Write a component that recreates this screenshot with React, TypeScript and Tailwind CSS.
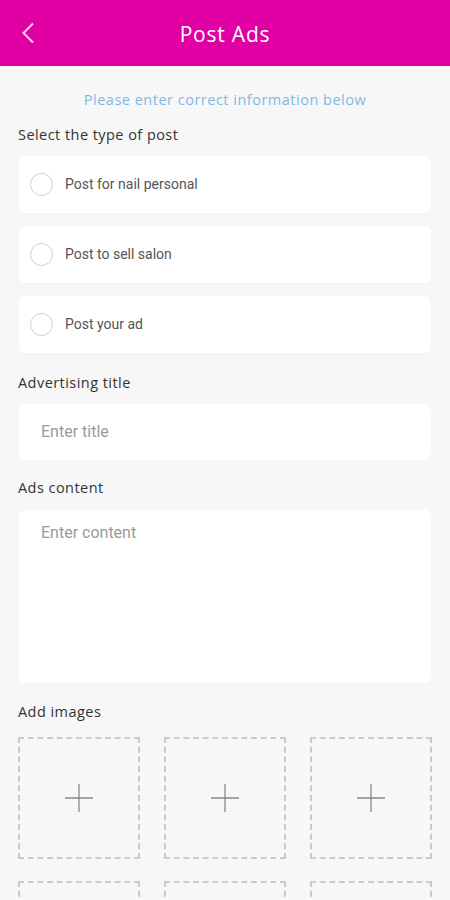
import { useState } from 'react';

const POST_TYPES = ['Post for nail personal', 'Post to sell salon', 'Post your ad'];

const labelFont = { fontFamily: '"Open Sans", "Liberation Sans", sans-serif' };

function ImageSlot() {
  return (
    <button
      type="button"
      className="aspect-square w-full border-2 border-dashed border-[#cacaca] flex items-center justify-center"
    >
      <svg width="30" height="30" viewBox="0 0 30 30" fill="none" stroke="#8a8a8a" strokeWidth="1.3">
        <path d="M15 1v28M1 15h28" />
      </svg>
    </button>
  );
}

export default function App() {
  const [type, setType] = useState<string | null>(null);

  return (
    <div className="min-h-[900px] bg-[#f7f7f7] font-['Roboto',sans-serif]">
      <header className="h-[66px] bg-[#e000a4] flex items-center relative">
        <button type="button" className="absolute left-[17px] top-[18px] p-1" aria-label="Back">
          <svg width="14" height="22" viewBox="0 0 14 22" fill="none" stroke="#f8d6ee" strokeWidth="2">
            <path d="M12 1.5L2.5 11l9.5 9.5" />
          </svg>
        </button>
        <h1
          className="flex-1 pt-[3px] text-center text-white text-[21px] font-medium tracking-[0.8px]"
          style={labelFont}
        >
          Post Ads
        </h1>
      </header>

      <main className="px-[18px]">
        <p className="mt-[23px] text-center text-[14.5px] tracking-[0.5px] text-[#80b9e6]" style={labelFont}>
          Please enter correct information below
        </p>

        <p className="mt-[13px] text-[14.5px] tracking-[0.45px] text-[#333]" style={labelFont}>
          Select the type of post
        </p>

        <div className="mt-[10px] flex flex-col gap-[13px] px-px">
          {POST_TYPES.map((t) => (
            <label
              key={t}
              className="h-[57px] bg-white rounded-[6px] flex items-center gap-[12px] px-[11px] shadow-[0_0_2px_rgba(0,0,0,0.05)] cursor-pointer"
              onClick={() => setType(t)}
            >
              <span className="w-[23px] h-[23px] rounded-full border border-[#cfcfcf] flex items-center justify-center">
                {type === t && <span className="w-[13px] h-[13px] rounded-full bg-[#e000a4]" />}
              </span>
              <span className="text-[14px] text-[#555]">{t}</span>
            </label>
          ))}
        </div>

        <p className="mt-[19px] text-[14.5px] tracking-[0.45px] text-[#333]" style={labelFont}>
          Advertising title
        </p>
        <div className="mt-[11px] mx-px h-[56px] bg-white rounded-[6px] flex items-center px-[22px]">
          <input
            className="w-full outline-none text-[16px] text-[#444] placeholder:text-[#9a9a9a] bg-transparent"
            placeholder="Enter title"
          />
        </div>

        <p className="mt-[17px] text-[14.5px] tracking-[0.45px] text-[#333]" style={labelFont}>
          Ads content
        </p>
        <div className="mt-[11px] mx-px h-[173px] bg-white rounded-[6px] px-[22px] pt-[11px]">
          <textarea
            className="w-full h-full resize-none outline-none text-[16px] text-[#444] placeholder:text-[#9a9a9a] bg-transparent"
            placeholder="Enter content"
          />
        </div>

        <p className="mt-[18px] text-[14.5px] tracking-[0.45px] text-[#333]" style={labelFont}>
          Add images
        </p>
        <div className="mt-[14px] grid grid-cols-3 gap-x-[24px] gap-y-[22px] pb-6">
          {Array.from({ length: 6 }).map((_, i) => (
            <ImageSlot key={i} />
          ))}
        </div>
      </main>
    </div>
  );
}
